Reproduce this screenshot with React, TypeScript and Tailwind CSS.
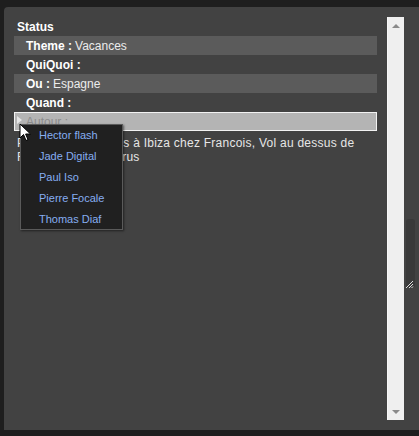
import React from 'react';

const rows = [
  { label: 'Theme :', value: 'Vacances', shaded: true },
  { label: 'QuiQuoi :', value: '', shaded: false },
  { label: 'Ou :', value: 'Espagne', shaded: true },
  { label: 'Quand :', value: '', shaded: false },
];

const authors = ['Hector flash', 'Jade Digital', 'Paul Iso', 'Pierre Focale', 'Thomas Diaf'];

const App: React.FC = () => {
  return (
    <div
      className="relative w-[419px] h-[436px] bg-[#1e1e1e] pt-[7px] pl-[4px] pb-[6px] overflow-hidden"
      style={{ fontFamily: '"Liberation Sans", Arial, sans-serif' }}
    >
      <div className="flex h-full bg-[#424242] rounded-tl-[4px]">
        {/* content */}
        <div className="relative w-[363px] ml-[10px] pt-[12px]">
          <div className="h-[17px] pl-[3px] text-[12px] font-bold text-white leading-[17px]">Status</div>
          {rows.map((r) => (
            <div
              key={r.label}
              className={`h-[19px] flex items-center pl-[12px] text-[12px] ${r.shaded ? 'bg-[#5b5b5b]' : ''}`}
            >
              <span className="font-bold text-white">{r.label}</span>
              {r.value && <span className="ml-[3px] text-[#ececec]">{r.value}</span>}
            </div>
          ))}
          <div className="relative h-[19px] flex items-center pl-[11px] text-[12px] bg-[#b4b4b4] border border-[#f2f2f2]">
            <span className="absolute left-[2px] top-[3px] w-0 h-0 border-y-[4px] border-y-transparent border-l-[5px] border-l-[#e6e6e6]" />
            <span className="text-[#8c8c8c]">Autour :</span>
          </div>
          <p className="mt-[5px] pl-[3px] w-[372px] whitespace-nowrap text-[12px] leading-[14px] tracking-[0.25px] text-[#e6e6e6]">
            Photos de vacances à Ibiza chez Francois, Vol au dessus de
            <br />
            Formentera, en Cirrus
          </p>

          {/* dropdown */}
          <div className="absolute left-[6px] top-[117px] w-[103px] h-[106px] bg-[#202020] border border-[#5a5a5a] shadow-[1px_1px_2px_rgba(0,0,0,0.5)]">
            {authors.map((a) => (
              <div key={a} className="h-[21px] flex items-center pl-[18px] text-[11px] text-[#86aef2]">
                {a}
              </div>
            ))}
          </div>

          {/* cursor */}
          <svg className="absolute left-[5px] top-[116px]" width="13" height="19" viewBox="0 0 13 19">
            <path d="M1 1 L1 15 L4.5 11.5 L7 17.5 L9 16.6 L6.6 11 L11.5 11 Z" fill="#ffffff" stroke="#000000" strokeWidth="1" />
          </svg>
        </div>

        {/* scrollbar */}
        <div className="mt-[10px] ml-[10px] w-[17px] h-[403px] bg-[#efefef] border-l border-[#f7f7f7] flex flex-col items-center justify-between pt-[7px] pb-[6px]">
          <span className="w-0 h-0 border-x-[4px] border-x-transparent border-b-[4px] border-b-[#8a8a8a]" />
          <span className="w-0 h-0 border-x-[4px] border-x-transparent border-t-[4px] border-t-[#8a8a8a]" />
        </div>
      </div>

      {/* side resize strip */}
      <div className="absolute left-[406px] top-[219px] w-[9px] h-[68px] bg-[#393939] rounded-t-[3px]" />
      <svg className="absolute left-[406px] top-[281px]" width="8" height="7" viewBox="0 0 8 7">
        <path d="M7 0 L0 7 M7 3 L3 7 M7 5.5 L5.5 7" stroke="#e0e0e0" strokeWidth="1" />
      </svg>
    </div>
  );
};

export default App;
